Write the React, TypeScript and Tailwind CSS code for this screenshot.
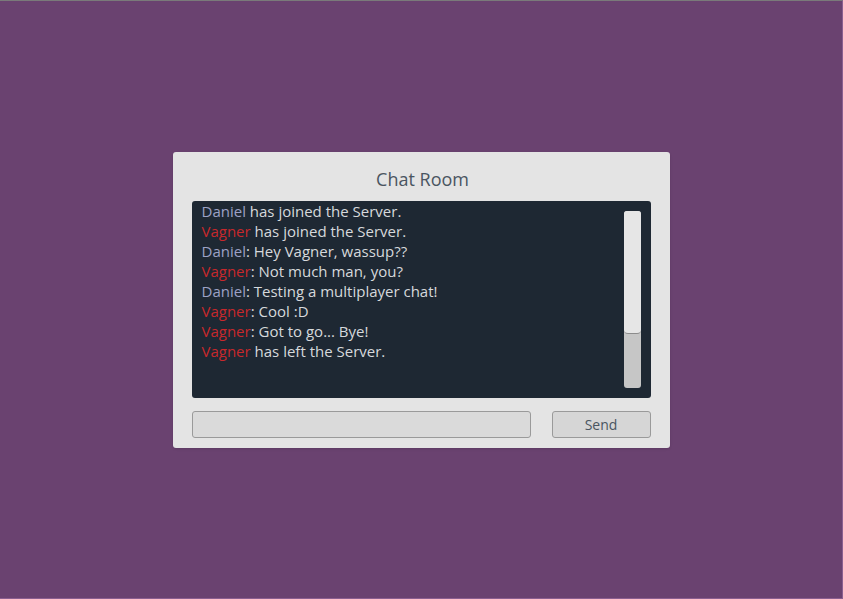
const messages: { user: "Daniel" | "Vagner"; text: string; event?: boolean }[] = [
  { user: "Daniel", text: " has joined the Server.", event: true },
  { user: "Vagner", text: " has joined the Server.", event: true },
  { user: "Daniel", text: ": Hey Vagner, wassup??" },
  { user: "Vagner", text: ": Not much man, you?" },
  { user: "Daniel", text: ": Testing a multiplayer chat!" },
  { user: "Vagner", text: ": Cool :D" },
  { user: "Vagner", text: ": Got to go... Bye!" },
  { user: "Vagner", text: " has left the Server.", event: true },
];

export default function App() {
  return (
    <div
      className="flex h-screen w-full items-center justify-center border-t border-t-[#7a7a7a] border-r border-r-[#8a5f90] border-b border-b-[#8a5f90] bg-[#6a4270]"
      style={{ fontFamily: '"Open Sans", "Noto Sans", sans-serif' }}
    >
      <div className="flex w-[497px] flex-col rounded-[3px] bg-[#e4e4e4] px-[19px] pt-[15px] pb-[10px] shadow-sm">
        <h1 className="pl-[3px] text-center text-[18px] leading-[24px] text-[#4a5561]">Chat Room</h1>

        <div className="mt-[10px] flex h-[197px] rounded-[3px] bg-[#1e2833]">
          <div className="flex-1 pl-[10px]">
            {messages.map((m, i) => (
              <div key={i} className="text-[15px] leading-[20px] text-[#d6d9dc]">
                <span className={m.user === "Daniel" ? "text-[#9da2c6]" : "text-[#c8282c]"}>
                  {m.user}
                </span>
                {m.text}
              </div>
            ))}
          </div>
          <div className="my-[10px] mr-[10px] flex w-[17px] flex-col overflow-hidden rounded-[3px] bg-[#c6c6c6]">
            <div className="h-[123px] rounded-b-[4px] border-b border-b-[#8c8c8c] bg-[#e6e6e6]" />
          </div>
        </div>

        <div className="mt-[13px] flex items-center justify-between">
          <input
            type="text"
            className="h-[27px] w-[339px] rounded-[3px] border border-[#9a9a9a] bg-[#dadada] px-2 text-[14px] outline-none"
          />
          <button className="h-[27px] w-[99px] rounded-[3px] border border-[#9a9a9a] bg-[#d6d6d6] pt-[2px] text-[14px] leading-[20px] text-[#4a5561]">
            Send
          </button>
        </div>
      </div>
    </div>
  );
}
